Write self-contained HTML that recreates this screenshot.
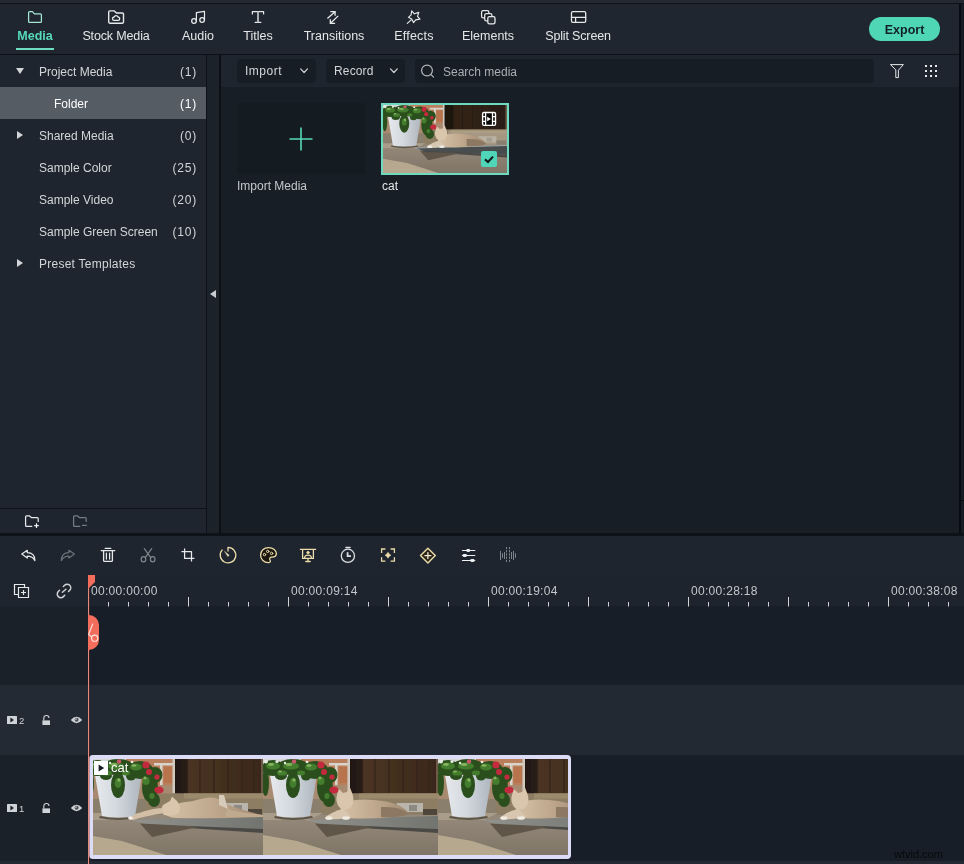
<!DOCTYPE html>
<html><head><meta charset="utf-8"><title>Editor</title>
<style>
*{box-sizing:border-box;margin:0;padding:0}
html,body{width:964px;height:864px;overflow:hidden;background:#1e252e;font-family:"Liberation Sans",sans-serif;font-size:12px;color:#d6d9dc}
.abs{position:absolute}
#root{position:relative;width:964px;height:864px;overflow:hidden;background:#1e252e;opacity:.999}
/* top */
#topstrip{left:0;top:0;width:964px;height:3px;background:#222931}
#topline{left:0;top:3px;width:964px;height:1px;background:#0e1319}
#tabs{left:0;top:4px;width:964px;height:50px;background:#1f262f}
#tabline{left:0;top:54px;width:964px;height:1px;background:#0c1117}
.tab{position:absolute;top:0;height:50px;text-align:center;color:#e4e6e8;font-size:12.5px;white-space:nowrap}
.tab .lbl{position:absolute;left:50%;top:25px;transform:translateX(-50%);line-height:14px}
.tab svg{position:absolute;left:50%;top:5px;transform:translateX(-50%)}
.tab.on{color:#55d9b9;font-weight:bold}
#export{left:869px;top:17px;width:71px;height:24px;border-radius:12px;background:#4fd6b4;color:#12202a;font-weight:bold;font-size:12.5px;text-align:center;line-height:26px}
/* sidebar */
#side{left:0;top:55px;width:206px;height:478px;background:#1e252e}
.row{position:absolute;left:0;width:206px;height:32px;line-height:34px;color:#d3d6d9;font-size:12px}
.row .t{position:absolute;left:39px}
.row .c{position:absolute;right:9px;letter-spacing:.8px}
.row.sel{background:#555c64;color:#fff}
.row .ar{position:absolute;left:15px;top:12px}
#sideline{left:0;top:508px;width:206px;height:1px;background:#0f141a}
#vb1{left:206px;top:55px;width:1px;height:478px;background:#0d1218}
#gap{left:207px;top:55px;width:12px;height:478px;background:#1b222a}
#vb2{left:219px;top:55px;width:2px;height:478px;background:#0b1016}
/* media */
#mtool{left:221px;top:55px;width:743px;height:32px;background:#1e252e}
#mgrid{left:221px;top:87px;width:743px;height:446px;background:#171e26}
.btn{position:absolute;top:59px;height:24px;border-radius:4px;background:#161d25;color:#d3d6d9;font-size:12px;line-height:25px}
/* timeline */
#tsep{left:0;top:533px;width:964px;height:3px;background:#0d1218}
#ttool{left:0;top:536px;width:964px;height:39px;background:#1e252e}
#ruler{left:0;top:575px;width:964px;height:31px;background:#1d242d}
#tr0{left:0;top:606px;width:964px;height:79px;background:#171e27}
#tr2{left:0;top:685px;width:964px;height:70px;background:#222933}
#tr1{left:0;top:755px;width:964px;height:106px;background:#171e27}
#hsb{left:0;top:861px;width:964px;height:3px;background:#222933}
.hd{position:absolute;left:0;width:88px;}
.rl{position:absolute;top:584px;font-size:12px;color:#c3c7cb;letter-spacing:.3px;line-height:14px}
</style></head><body><div id="root">
<svg width="0" height="0" style="position:absolute">
 <defs>
  <filter id="bl" x="-5%" y="-5%" width="110%" height="110%"><feGaussianBlur stdDeviation="0.7"/></filter>
  <linearGradient id="pot" x1="0" x2="1"><stop offset="0" stop-color="#e6e9ec"/><stop offset=".45" stop-color="#d4d9df"/><stop offset="1" stop-color="#aeb5bd"/></linearGradient>
  <linearGradient id="door" x1="0" x2="1"><stop offset="0" stop-color="#1f1611"/><stop offset=".14" stop-color="#2a1d16"/><stop offset=".16" stop-color="#4a3424"/><stop offset=".5" stop-color="#44301f"/><stop offset="1" stop-color="#3a281b"/></linearGradient>
  <linearGradient id="slab" x1="0" x2="1"><stop offset="0" stop-color="#92938e"/><stop offset="1" stop-color="#72746f"/></linearGradient>
  <linearGradient id="conc" x1="0" y1="0" x2="0" y2="1"><stop offset="0" stop-color="#95897a"/><stop offset="1" stop-color="#7f7566"/></linearGradient>
  <linearGradient id="catg" x1="0" x2="1"><stop offset="0" stop-color="#d6c2a8"/><stop offset=".5" stop-color="#bfa88d"/><stop offset="1" stop-color="#a08a72"/></linearGradient>
  <g id="scene">
   <rect x="0" y="0" width="175" height="96" fill="#8a7e6c"/>
   <!-- back wall -->
   <rect x="0" y="0" width="90" height="40" fill="#a78a70"/>
   <rect x="0" y="0" width="40" height="8" fill="#d5d8d4"/>
   <rect x="38" y="0" width="50" height="26" fill="#b97f5c"/>
   <rect x="66" y="4" width="22" height="2.5" fill="#d9d4cb"/><rect x="72" y="4" width="2.6" height="22" fill="#d9d4cb"/><rect x="84.5" y="0" width="3" height="34" fill="#cfc9c0"/>
   <rect x="76" y="8" width="8" height="16" fill="#b8744d"/>
   <!-- door -->
   <rect x="87" y="0" width="86" height="34.5" fill="url(#door)"/>
   <path d="M112 0V34M126 0V34M140 0V34M154 0V34M166 0V34" stroke="#34241a" stroke-width="1.2"/>
   <rect x="173" y="0" width="2" height="34.5" fill="#6d5a46"/>
   <!-- stone wall -->
   <rect x="58" y="34.5" width="117" height="20" fill="#8d7d64"/>
   <rect x="96" y="34.5" width="79" height="5" fill="#9c8a6c"/>
   <path d="M134 44 h26 v9 h-30 z" fill="#b9b5ac"/><path d="M146 46 h8 v6 h-8z" fill="#8d8a84"/>
   <path d="M160 50 h14 v6 h-14z" fill="#4f463b"/>
   <!-- concrete -->
   <rect x="0" y="56" width="175" height="40" fill="url(#conc)"/>
   <path d="M0 54 H60 L46 61 H0 Z" fill="#a99d8a"/>
   <path d="M0 76 L34 82 L78 96 H0 Z" fill="#b6a88f"/>
   <!-- slab -->
   <path d="M44 61 L175 57 V70 L60 66 Z" fill="url(#slab)"/>
   <path d="M100 67 L175 70 V74 L100 69 Z" fill="#4b4a45"/>
   <path d="M52 64.5 L112 67.5 L64 78 Z" fill="#5e5548"/>
   <!-- pot -->
   <path d="M7 16 H54 L47 57 Q30 60 14 57 Z" fill="url(#pot)"/>
   <path d="M12 57 Q30 61 49 57 L50 59 Q30 63 11 59Z" fill="#5d5548"/>
   <!-- foliage -->
   <g fill="#2b4f1f">
    <ellipse cx="10" cy="9" rx="11" ry="8"/><ellipse cx="30" cy="8" rx="16" ry="8"/><ellipse cx="52" cy="11" rx="13" ry="9"/>
    <ellipse cx="30" cy="26" rx="7" ry="13"/><ellipse cx="62" cy="29" rx="8" ry="14"/><ellipse cx="2.5" cy="24" rx="3.5" ry="13"/>
    <ellipse cx="67" cy="16" rx="7.5" ry="8"/><ellipse cx="66" cy="41" rx="6" ry="7"/><ellipse cx="18" cy="17" rx="6" ry="4"/><ellipse cx="43" cy="17" rx="5" ry="4.5"/>
   </g>
   <g fill="#447d2d">
    <ellipse cx="10" cy="7" rx="7" ry="3.6"/><ellipse cx="28" cy="7" rx="8" ry="3.6"/><ellipse cx="48" cy="8" rx="6" ry="3.6"/><ellipse cx="30" cy="24" rx="3.4" ry="5"/><ellipse cx="19" cy="14" rx="5" ry="2.6"/><ellipse cx="58" cy="22" rx="3.6" ry="4"/><ellipse cx="38" cy="14" rx="4" ry="2.4"/><ellipse cx="64" cy="37" rx="2.6" ry="3"/>
   </g>
   <g fill="#86b35e"><ellipse cx="8" cy="5.5" rx="3" ry="1.4"/><ellipse cx="26" cy="5.5" rx="3.4" ry="1.4"/><ellipse cx="46" cy="6.5" rx="2.6" ry="1.3"/><ellipse cx="17" cy="12.5" rx="2" ry="1.1"/><ellipse cx="31" cy="21" rx="1.6" ry="1.8"/><ellipse cx="57" cy="19" rx="1.6" ry="1.4"/></g>
   <g fill="#c42a3c"><circle cx="58" cy="6" r="3.6"/><circle cx="61" cy="13" r="3"/><circle cx="69" cy="18" r="2.6"/><ellipse cx="71" cy="31" rx="4.6" ry="3.6"/><circle cx="31" cy="2.5" r="2.2" fill="#c9576a"/></g>
   <g fill="#e8ece6"><circle cx="14" cy="2.5" r="1.6"/><circle cx="22" cy="4" r="1.2"/><circle cx="44" cy="3" r="1.3"/><circle cx="3" cy="2.5" r="2"/></g>
  </g>
  <g id="catup">
   <path d="M78 44 Q96 38 120 42 Q140 45 146 55 Q120 61 84 59 Q76 58 78 44Z" fill="url(#catg)"/>
   <path d="M74 36 L76 30 L80 34 L84 33 L87 28.5 L89.5 35 Q92 42 88 48 Q82 53 76 48 Q72 42 74 36Z" fill="#d9c6ad"/>
   <path d="M62 58.5 Q70 52 80 50 L88 58 Q74 61 63 60.5Z" fill="#d8c7b0"/>
   <ellipse cx="66" cy="59" rx="3.6" ry="1.8" fill="#f1ebe2"/><ellipse cx="83" cy="59" rx="4" ry="1.8" fill="#f1ebe2"/>
   <path d="M118 48 Q138 47 146 55 Q135 59 118 58Z" fill="#8d7863"/>
  </g>
  <g id="catdown">
   <path d="M70 50 Q80 44 100 42 Q118 36 126 40 Q134 48 170 56 L170 58 Q130 60 84 59 Q72 59 70 50Z" fill="url(#catg)"/>
   <path d="M126 36 L131 36 L135 50 L126 46Z" fill="#d6cbbb"/>
   <path d="M77 42 L79 37.5 L84 42 Q88 47 86 54 Q80 58 71 56 Q66 52 70 46Z" fill="#d9c6ad"/>
   <path d="M36 58.5 Q52 50 68 49 L72 54 Q52 57 40 61Z" fill="#d2bfa6"/>
   <ellipse cx="37.5" cy="59" rx="2.4" ry="1.8" fill="#f4efe8"/>
   <path d="M134 50 Q150 54 170 56 L170 58 L132 58Z" fill="#bfa98f"/>
  </g>
 </defs>
</svg>

<div class="abs" id="topstrip"></div><div class="abs" id="topline"></div>
<div class="abs" id="tabs">
 <svg class="abs" style="left:0;top:0" width="964" height="50" viewBox="0 4 964 50" fill="none" stroke="#e6e8ea" stroke-width="1.25" stroke-linejoin="round" stroke-linecap="round">
  <!-- media folder -->
  <path d="M28.6 12.6 Q28.6 11.6 29.6 11.6 H32.4 L34.4 13.8 H40.4 Q41.4 13.8 41.4 14.8 V21.4 Q41.4 22.4 40.4 22.4 H29.6 Q28.6 22.4 28.6 21.4 Z" stroke="#a5e6d6"/>
  <!-- stock media -->
  <path d="M108.7 12 Q108.7 10.9 109.8 10.9 H114.3 L116.4 13 H122.4 Q123.5 13 123.5 14.1 V22.1 Q123.5 23.2 122.4 23.2 H109.8 Q108.7 23.2 108.7 22.1 Z" stroke-width="1.4"/>
  <path d="M114.2 20.4 H118 A1.7 1.7 0 0 0 118 17 A2 2 0 0 0 114.2 17 A1.7 1.7 0 0 0 114.2 20.4 Z" stroke-width="1.3"/>
  <!-- audio -->
  <circle cx="194" cy="21" r="2.3" stroke-width="1.3"/><circle cx="202.1" cy="20" r="2.3" stroke-width="1.3"/>
  <path d="M196.4 21 V12.6 L204.5 11.4 V20" stroke-width="1.2"/>
  <!-- titles T -->
  <path d="M252.4 14 V11.6 H263.6 V14 M255.2 22.4 H260.8" stroke-width="1.2"/>
  <path d="M258 11.6 V22.4" stroke="#b9bec3" stroke-width="1.8" stroke-linecap="butt"/>
  <!-- transitions -->
  <path d="M330.3 11.7 H335.1 V15.8 M335 11.8 L327.4 18.6 M335.1 23.4 H330.3 V19.2 M330.5 23.2 L338.2 15.9" stroke-width="1.3" stroke-linecap="butt" stroke-linejoin="miter"/>
  <!-- effects -->
  <path d="M411.7 10.9 L414.4 13.8 L418.8 12.4 L417.5 16.4 L420 19.1 L415.7 19.9 L413.5 22.6 L411.7 19.1 L408.4 17.3 L411.1 14.8 Z M410.9 20.1 L407.3 23.4" stroke-width="1.15"/>
  <!-- elements -->
  <rect x="481.6" y="10.6" width="7.2" height="7.2" rx="1.6" fill="#141a20" stroke-width="1.3"/>
  <rect x="484.7" y="13.6" width="7.2" height="7.2" rx="1.6" fill="#141a20" stroke-width="1.3"/>
  <rect x="487.8" y="16.6" width="7.2" height="7.2" rx="1.6" fill="#2b3036" stroke-width="1.3"/>
  <!-- split screen -->
  <rect x="571.5" y="11.6" width="14.2" height="10.8" rx="1.4" fill="#1a2026" stroke-width="1.3"/>
  <path d="M571.5 17.4 H585.7 M575.6 17.4 V22.4" stroke-width="1.3"/>
 </svg>
 <div class="tab on" style="left:5px;width:60px"><span class="lbl">Media</span></div>
 <div class="tab" style="left:76px;width:80px"><span class="lbl" style="letter-spacing:-.15px">Stock Media</span></div>
 <div class="tab" style="left:168px;width:60px"><span class="lbl">Audio</span></div>
 <div class="tab" style="left:228px;width:60px"><span class="lbl">Titles</span></div>
 <div class="tab" style="left:294px;width:80px"><span class="lbl">Transitions</span></div>
 <div class="tab" style="left:384px;width:60px"><span class="lbl" style="letter-spacing:.2px">Effects</span></div>
 <div class="tab" style="left:458px;width:60px"><span class="lbl">Elements</span></div>
 <div class="tab" style="left:538px;width:80px"><span class="lbl" style="letter-spacing:-.15px">Split Screen</span></div>
 <div class="abs" style="left:16px;top:44px;width:38px;height:2px;background:#6fdcc2"></div>
</div>
<div class="abs" id="tabline"></div>
<div class="abs" id="export">Export</div>

<div class="abs" id="side">
 <div class="row" style="top:0"><svg class="ar" width="10" height="8" viewBox="0 0 10 8"><path d="M1 1 H9 L5 7 Z" fill="#d3d6d9"/></svg><span class="t">Project Media</span><span class="c">(1)</span></div>
 <div class="row sel" style="top:32px"><span class="t" style="left:54px">Folder</span><span class="c">(1)</span></div>
 <div class="row" style="top:64px"><svg class="ar" style="left:16px;top:11px" width="8" height="10" viewBox="0 0 8 10"><path d="M1 1 V9 L7 5 Z" fill="#d3d6d9"/></svg><span class="t">Shared Media</span><span class="c">(0)</span></div>
 <div class="row" style="top:96px"><span class="t">Sample Color</span><span class="c">(25)</span></div>
 <div class="row" style="top:128px"><span class="t">Sample Video</span><span class="c">(20)</span></div>
 <div class="row" style="top:160px"><span class="t">Sample Green Screen</span><span class="c">(10)</span></div>
 <div class="row" style="top:192px"><svg class="ar" style="left:16px;top:11px" width="8" height="10" viewBox="0 0 8 10"><path d="M1 1 V9 L7 5 Z" fill="#d3d6d9"/></svg><span class="t" style="letter-spacing:.25px">Preset Templates</span></div>
</div>
<div class="abs" id="sideline"></div>
<div class="abs" id="vb1"></div><div class="abs" id="gap"></div><div class="abs" id="vb2"></div>


<svg class="abs" style="left:0;top:509px" width="206" height="24" viewBox="0 509 206 24" fill="none" stroke-width="1.25" stroke-linejoin="round" stroke-linecap="round">
 <path d="M31.8 526.4 H26.6 Q25.6 526.4 25.6 525.4 V516.8 Q25.6 515.8 26.6 515.8 H29.2 L31.4 517.6 H37.2 Q38.2 517.6 38.2 518.6 V521.4" stroke="#e6e8ea"/>
 <path d="M34.2 525.6 H38.8 M36.5 523.3 V527.9" stroke="#f2f3f4" stroke-width="1.2" stroke-linecap="butt"/>
 <path d="M79.8 526.4 H74.6 Q73.6 526.4 73.6 525.4 V516.8 Q73.6 515.8 74.6 515.8 H77.2 L79.4 517.6 H85.2 Q86.2 517.6 86.2 518.6 V521.4" stroke="#757c84"/>
 <path d="M82 525.4 H86.8" stroke="#757c84" stroke-linecap="butt"/>
</svg>
<svg class="abs" style="left:208px;top:288px" width="10" height="12" viewBox="0 0 10 12"><path d="M8 2 V10 L2 6 Z" fill="#c9cdd1"/></svg>
<div class="abs" id="mtool"></div>
<div class="abs" id="mgrid"></div>
<div class="btn" style="left:237px;width:79px"><span style="position:absolute;left:8px;letter-spacing:.5px">Import</span></div>
<div class="btn" style="left:326px;width:79px"><span style="position:absolute;left:8px;letter-spacing:.15px">Record</span></div>
<div class="btn" style="left:415px;width:459px;color:#a9aeb3"><span style="position:absolute;left:28px;top:1px">Search media</span></div>


<svg class="abs" style="left:221px;top:55px" width="743" height="32" viewBox="221 55 743 32" fill="none" stroke="#c9cdd1" stroke-width="1.3" stroke-linecap="round" stroke-linejoin="round">
 <path d="M300.7 68.9 L304.1 72.5 L307.5 68.9"/>
 <path d="M390.5 68.9 L393.9 72.5 L397.3 68.9"/>
 <circle cx="427" cy="70.5" r="5.4" stroke="#b4b9be" stroke-width="1.2"/><path d="M431 74.6 L433.6 77.2" stroke="#b4b9be" stroke-width="1.2"/>
 <path d="M890.8 64.6 H903.4 L898.4 70.2 V77.6 H895.8 V70.2 Z" stroke="#e6e8ea" stroke-width="1" stroke-linejoin="miter"/>
 <g fill="#e6e8ea" stroke="none">
  <rect x="925" y="65" width="2" height="2"/><rect x="930" y="65" width="2" height="2"/><rect x="935" y="65" width="2" height="2"/>
  <rect x="925" y="70" width="2" height="2"/><rect x="930" y="70" width="2" height="2"/><rect x="935" y="70" width="2" height="2"/>
  <rect x="925" y="75" width="2" height="2"/><rect x="930" y="75" width="2" height="2"/><rect x="935" y="75" width="2" height="2"/>
 </g>
</svg>
<div class="abs" style="left:237px;top:103px;width:128px;height:71px;background:#141b21"></div>
<svg class="abs" style="left:288px;top:126px" width="26" height="26" viewBox="0 0 26 26"><path d="M13 1.5 V24.5 M1.5 13 H24.5" stroke="#55d9b9" stroke-width="1.6"/></svg>
<div class="abs" style="left:237px;top:178px;font-size:12px;color:#c3c7cb;line-height:16px">Import Media</div>
<div class="abs" style="left:382px;top:178px;font-size:12px;color:#e6e8ea;line-height:16px">cat</div>
<div class="abs" id="thumb" style="left:381px;top:103px;width:128px;height:72px;background:#6fd9c0"></div>
<svg class="abs" style="left:383px;top:105px" width="124" height="68" viewBox="0 0 175 96" preserveAspectRatio="none"><g filter="url(#bl)"><use href="#scene"/><rect x="87" y="0" width="86" height="34.5" fill="#120c08" opacity=".4"/><rect x="92" y="36" width="83" height="20" fill="#b9af9b" opacity=".55"/><path d="M46 60.5 L175 57 V70 L60 66.5 Z" fill="#3f4547" opacity=".85"/><path d="M46 60 L175 56.4 V58 L46 61.4Z" fill="#a3a8a6"/><use href="#catup"/></g></svg>
<svg class="abs" style="left:480px;top:110px" width="18" height="18" viewBox="0 0 18 18" fill="none" stroke="#fff" stroke-width="1.4">
 <rect x="2.6" y="2.5" width="12.9" height="12.9" rx="1.3" fill="#0a0807"/><path d="M5.6 2.5 V15.4 M12.5 2.5 V15.4 M2.6 6.6 H5.6 M2.6 11.4 H5.6 M12.5 6.6 H15.5 M12.5 11.4 H15.5" stroke-width="1.3"/><path d="M7.2 6.8 L10.9 9 L7.2 11.2Z" fill="#fff" stroke="none"/></svg>
<div class="abs" style="left:481px;top:151px;width:16px;height:16px;border-radius:2px;background:#4fd6b8"></div>
<svg class="abs" style="left:481px;top:151px" width="16" height="16" viewBox="0 0 16 16"><path d="M4 8.4 L7 11 L12 5.6" fill="none" stroke="#0f1a1c" stroke-width="2.1"/></svg>
<div class="abs" style="left:959px;top:4px;width:2px;height:530px;background:#070c12"></div><div class="abs" style="left:961px;top:4px;width:3px;height:530px;background:#161c24"></div><div class="abs" style="left:961px;top:500px;width:3px;height:1px;background:#070c12"></div>
<div class="abs" id="tsep"></div>
<div class="abs" id="ttool"></div>
<div class="abs" id="ruler"></div>
<div class="abs" id="tr0"></div><div class="abs" id="tr2"></div><div class="abs" id="tr1"></div><div class="abs" id="hsb"></div>

<div class="abs" style="left:0;top:575px;width:88px;height:31px;background:#1e252e"></div>
<div class="abs" style="left:0;top:606px;width:88px;height:79px;background:#1a2129"></div>
<div class="abs" style="left:0;top:685px;width:88px;height:70px;background:#232a34"></div>
<div class="abs" style="left:0;top:755px;width:88px;height:106px;background:#1a2129"></div>
<svg class="abs" style="left:0;top:536px" width="964" height="71" viewBox="0 536 964 71" fill="none" stroke="#e6e8ea" stroke-width="1.25" stroke-linecap="round" stroke-linejoin="round">
 <!-- undo / redo -->
 <path d="M21.8 554.1 L27.3 550.3 V552.7 C31.6 552.7 34.8 555.2 34.9 560.6 C33.2 557.4 31 556.1 27.3 556.1 V558.1 Z"/>
 <path d="M74.4 554.1 L68.9 550.3 V552.7 C64.6 552.7 61.4 555.2 61.3 560.6 C63 557.4 65.2 556.1 68.9 556.1 V558.1 Z" stroke="#6a7179"/>
 <!-- trash -->
 <path d="M105.2 548.4 H110.8 M101.2 550.6 H114.8 M103.6 550.8 V560.4 Q103.6 561.4 104.6 561.4 H111.4 Q112.4 561.4 112.4 560.4 V550.8 M106.4 553.2 V559 M109.6 553.2 V559" stroke-width="1.3"/>
 <!-- scissors -->
 <g stroke="#7f868e" stroke-width="1.2"><path d="M144.3 548.6 L150.6 557.4 M151.7 548.6 L145.4 557.4"/><ellipse cx="143.5" cy="559.2" rx="2.3" ry="2.6"/><ellipse cx="152.7" cy="559.2" rx="2.3" ry="2.6"/></g>
 <!-- crop -->
 <path d="M184.6 548.4 V558.4 H194.4 M181.4 551.5 H191.5 V561.4" stroke-width="1.25" stroke-linecap="butt"/>
 <!-- speed -->
 <g stroke="#ecdcaa"><path d="M228 551 V547.3 A7.8 7.8 0 1 1 222.2 549.9" stroke-width="1.3"/><path d="M224.6 551.3 L229.3 555.3 L227.9 556.5 Z" fill="#f3ead0" stroke-width=".3"/></g>
 <!-- palette -->
 <g stroke="#ecdcaa" stroke-width="1.3"><path d="M268.6 547.6 C263.8 547.6 260.6 551 260.6 555.2 C260.6 559.6 264.2 562.6 268.2 562.6 C270.4 562.6 270.8 561.2 270 560 C269 558.4 270 557.2 271.8 557.2 C275 557.2 276.4 555.6 276.4 553.6 C276.4 550.4 273.2 547.6 268.6 547.6 Z" fill="#1b1810"/>
  <circle cx="264.5" cy="554.6" r="1.2" stroke-width="1"/><circle cx="267.7" cy="551.4" r="1.2" stroke-width="1"/><circle cx="271.6" cy="553.4" r="1.2" stroke-width="1"/></g>
 <!-- green screen -->
 <g stroke="#ecdcaa" stroke-width="1.3"><path d="M300.4 549.4 H315.6 M302.6 549.6 V558.4 H313.4 V549.6 M308 558.6 V561.2 M305.8 561.5 H310.2"/><circle cx="308" cy="552.6" r="1.3" fill="#ecdcaa" stroke-width=".6"/><path d="M304.6 558.2 A3.4 3 0 0 1 311.4 558.2"/></g>
 <!-- stopwatch -->
 <g stroke="#dadde1"><circle cx="347.9" cy="555.8" r="6.6" stroke-width="1.3"/><path d="M346 547.5 H350" stroke-width="1.6"/><path d="M347.6 552.2 V556.2 H351" stroke-width="1.8" stroke-linecap="butt" stroke-linejoin="miter"/></g>
 <!-- motion track -->
 <g stroke="#ecdcaa" stroke-width="1.3" stroke-linecap="butt" stroke-linejoin="miter"><path d="M385.4 549 H381.6 V553 M390.6 549 H394.4 V553 M385.4 561.2 H381.6 V557.2 M390.6 561.2 H394.4 V557.2"/><path d="M388 552.2 L389.2 554 L391 555.2 L389.2 556.4 L388 558.2 L386.8 556.4 L385 555.2 L386.8 554 Z" fill="#ecdcaa" stroke-width=".5"/></g>
 <!-- keyframe -->
 <g stroke="#ecdcaa" stroke-width="1.4"><path d="M427.9 548.2 L435.3 555.6 L427.9 563 L420.5 555.6 Z" fill="#2a2518"/><path d="M427.9 552.6 V558.6 M424.9 555.6 H430.9" stroke="#f3ead0" stroke-width="1.3"/></g>
 <!-- sliders -->
 <g stroke="#f0f1f2" stroke-width="1.2"><path d="M462.4 550.5 H474.8 M462.4 555.5 H474.8 M462.4 560.5 H474.8"/><g stroke="none" fill="#f0f1f2"><rect x="466.2" y="549" width="4" height="3" rx="1.4"/><rect x="462.6" y="554" width="4.4" height="3" rx="1.4"/><rect x="470.2" y="559" width="4.4" height="3" rx="1.4"/></g></g>
 <!-- waveform -->
 <g stroke="#7d848c" stroke-width="1" stroke-linecap="butt"><path d="M500.5 551 V560 M502.5 553.4 V557.8 M504.5 552 V559 M511.5 552 V559 M513.5 551 V560 M515.5 553.4 V557.8"/><path d="M506.5 547 V563 M509.5 547 V563" stroke-dasharray="2.2 1"/></g>
 <!-- add track -->
 <path d="M18.5 594.5 H14.5 V584.5 H24.5 V587.5 M18.5 587.5 H28.5 V597.5 H18.5 Z M23.5 590 V595 M21 592.5 H26" stroke-width="1.2" stroke-linejoin="miter" stroke-linecap="butt"/>
 <!-- link -->
 <g stroke="#cfd3d7" stroke-width="1.5"><path d="M63.3 586.5 L64.6 585.2 A3.6 3.6 0 0 1 69.7 590.3 L68.5 591.5 M64.7 595.3 L63.4 596.6 A3.6 3.6 0 0 1 58.3 591.5 L59.5 590.3 M62.4 592.3 L65.9 589.2"/></g>
 <!-- ticks -->
 <path d="M88.5 597V606.5M108.5 602V606.5M128.5 602V606.5M148.5 602V606.5M168.5 602V606.5M188.5 597V606.5M208.5 602V606.5M228.5 602V606.5M248.5 602V606.5M268.5 602V606.5M288.5 597V606.5M308.5 602V606.5M328.5 602V606.5M348.5 602V606.5M368.5 602V606.5M388.5 597V606.5M408.5 602V606.5M428.5 602V606.5M448.5 602V606.5M468.5 602V606.5M488.5 597V606.5M508.5 602V606.5M528.5 602V606.5M548.5 602V606.5M568.5 602V606.5M588.5 597V606.5M608.5 602V606.5M628.5 602V606.5M648.5 602V606.5M668.5 602V606.5M688.5 597V606.5M708.5 602V606.5M728.5 602V606.5M748.5 602V606.5M768.5 602V606.5M788.5 597V606.5M808.5 602V606.5M828.5 602V606.5M848.5 602V606.5M868.5 602V606.5M888.5 597V606.5M908.5 602V606.5M928.5 602V606.5M948.5 602V606.5" stroke="#d0d3d6" stroke-width="1" stroke-linecap="butt"/>
</svg>
<span class="rl" style="left:91px">00:00:00:00</span>
<span class="rl" style="left:291px">00:00:09:14</span>
<span class="rl" style="left:491px">00:00:19:04</span>
<span class="rl" style="left:691px">00:00:28:18</span>
<span class="rl" style="left:891px">00:00:38:08</span>

<svg class="abs" style="left:0;top:700px" width="88" height="130" viewBox="0 700 88 130">
 <g id="thd" fill="#cfd3d7">
  <rect x="7" y="716" width="10" height="8" rx=".6"/><path d="M10.4 717.6 L14 720 L10.4 722.4Z" fill="#1a2129"/>
  <path d="M42.4 720.4 H50 V725 H42.4 Z"/><path d="M43.8 720.4 V718.2 A2.6 2.6 0 0 1 49 718" fill="none" stroke="#cfd3d7" stroke-width="1.1"/>
  <path d="M70.8 720 Q76.5 713.6 82.2 720 Q76.5 726.4 70.8 720Z"/><circle cx="76.6" cy="719.8" r="2" fill="#4a5058"/><path d="M76.6 719.8 V718.2 A1.6 1.6 0 0 0 75 719.8Z" fill="#cfd3d7"/>
 </g>
 <use href="#thd" transform="translate(0,88)"/>
</svg>
<div class="abs" style="left:19px;top:715px;font-size:9.5px;line-height:11px;color:#cfd3d7">2</div>
<div class="abs" style="left:19px;top:803px;font-size:9.5px;line-height:11px;color:#cfd3d7">1</div>

<!-- clip -->
<div class="abs" style="left:89px;top:755px;width:482px;height:104px;border-radius:4px;background:#dcdcf6"></div>
<div class="abs" style="left:93px;top:759px;width:475px;height:96px;overflow:hidden;background:#8a7e6c">
 <svg class="abs" style="left:0;top:0" width="475" height="96" viewBox="0 0 475 96">
  <g filter="url(#bl)">
   <svg x="0" y="0" width="170" height="96" viewBox="5 0 170 96" preserveAspectRatio="none" overflow="hidden"><use href="#scene"/><use href="#catdown" transform="translate(5,0)"/></svg>
   <svg x="170" y="0" width="175" height="96" viewBox="0 0 175 96" overflow="hidden"><use href="#scene"/><use href="#catup"/></svg>
   <svg x="345" y="0" width="130" height="96" viewBox="0 0 130 96" overflow="hidden"><use href="#scene"/><use href="#catup"/></svg>
  </g>
 </svg>
</div>
<div class="abs" style="left:94px;top:761px;width:14px;height:14px;background:#fff"></div>
<svg class="abs" style="left:94px;top:761px" width="14" height="14" viewBox="0 0 14 14"><path d="M4.6 3.4 L10.2 7 L4.6 10.6Z" fill="#1a1f26"/></svg>
<div class="abs" style="left:111px;top:760px;font-size:13px;line-height:16px;color:#fff">cat</div>

<!-- playhead -->
<div class="abs" style="left:88px;top:575px;width:1px;height:289px;background:#e38b7c"></div><div class="abs" style="left:89px;top:575px;width:1px;height:289px;background:rgba(120,30,30,.35)"></div>
<svg class="abs" style="left:88px;top:575px" width="12" height="80" viewBox="0 0 12 80">
 <path d="M0 0 H7 V7 L1.5 12.5 H0 Z" fill="#f26d5b"/>
 <path d="M0 40 H1 A10 10 0 0 1 11 50 V65 A10 10 0 0 1 1 75 H0 Z" fill="#f26d5b"/>
 <path d="M4.9 48.6 L0.6 59.6 L3.8 62" stroke="#fde8e3" stroke-width="1.1" fill="none"/><circle cx="6.7" cy="63.2" r="3.1" fill="none" stroke="#fde8e3" stroke-width="1.1"/>
</svg>
<div class="abs" style="left:894px;top:848px;font-size:11px;line-height:13px;color:#07090c">wtvid.com</div>
</div></body></html>
